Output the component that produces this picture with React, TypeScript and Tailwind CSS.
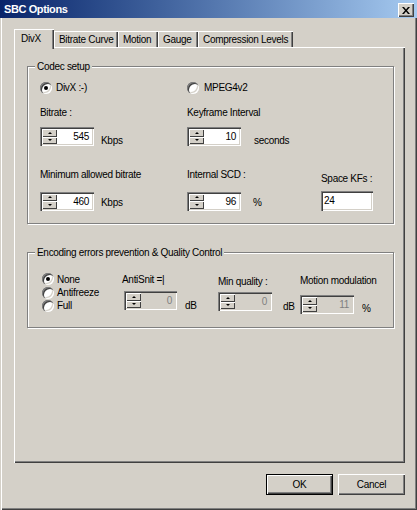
import React from "react";

const FACE = "bg-[#d4d0c8]";
const SUNKEN =
  "shadow-[inset_1px_1px_0_#808080,inset_2px_2px_0_#404040,inset_-1px_-1px_0_#ffffff,inset_-2px_-2px_0_#d4d0c8]";
const RAISED =
  "shadow-[inset_1px_1px_0_#ffffff,inset_-1px_-1px_0_#404040,inset_-2px_-2px_0_#808080]";

function Radio({ checked }: { checked?: boolean }) {
  return (
    <span
      className={`relative inline-block w-[12px] h-[12px] shrink-0 rounded-full bg-white ${SUNKEN}`}
    >
      {checked && (
        <span className="absolute left-[4px] top-[4px] w-[4px] h-[4px] rounded-full bg-black" />
      )}
    </span>
  );
}

function SpinBtn({ up }: { up?: boolean }) {
  return (
    <div
      className={`flex-1 flex items-center justify-center ${FACE} shadow-[inset_1px_1px_0_#ffffff,inset_-1px_-1px_0_#404040]`}
    >
      {up ? (
        <span className="w-0 h-0 border-x-[2px] border-x-transparent border-b-[2px] border-b-black" />
      ) : (
        <span className="w-0 h-0 border-x-[2px] border-x-transparent border-t-[2px] border-t-black" />
      )}
    </div>
  );
}

function Spin({
  value,
  disabled,
  w = "w-[54px]",
}: {
  value: string;
  disabled?: boolean;
  w?: string;
}) {
  return (
    <div
      className={`flex h-[19px] ${w} p-[2px] shrink-0 ${SUNKEN} ${
        disabled ? FACE : "bg-white"
      }`}
    >
      <div className="flex flex-col w-[15px] h-[15px]">
        <SpinBtn up />
        <SpinBtn />
      </div>
      <div
        className={`flex-1 text-right pr-[3px] leading-[15px] ${
          disabled ? "text-[#808080]" : "text-black"
        }`}
      >
        {value}
      </div>
    </div>
  );
}

function Group({
  label,
  className,
  children,
}: {
  label: string;
  className: string;
  children: React.ReactNode;
}) {
  return (
    <div
      className={`relative border border-[#808080] shadow-[inset_1px_1px_0_#ffffff,1px_1px_0_#ffffff] ${className}`}
    >
      <span className={`absolute -top-[7px] left-[7px] px-[2px] leading-[13px] ${FACE}`}>
        {label}
      </span>
      {children}
    </div>
  );
}

function Tab({
  label,
  active,
  w,
}: {
  label: string;
  active?: boolean;
  w: string;
}) {
  if (active) {
    return (
      <div
        className={`relative z-10 ${w} h-[20px] -mb-[2px] ${FACE} shadow-[inset_1px_1px_0_#ffffff,inset_-1px_0_0_#404040,inset_-2px_0_0_#808080] pl-[7px] pt-[3px] leading-[13px]`}
      >
        {label}
      </div>
    );
  }
  return (
    <div
      className={`${w} h-[16px] ${FACE} shadow-[inset_1px_1px_0_#ffffff,inset_-1px_0_0_#404040,inset_-2px_0_0_#808080] pl-[5px] pt-[2px] leading-[13px]`}
    >
      {label}
    </div>
  );
}

export default function App() {
  return (
    <div
      className={`w-[417px] h-[510px] ${FACE} flex flex-col text-[10px] tracking-[-0.3px] text-black shadow-[inset_1px_0_0_#d4d0c8,inset_2px_0_0_#ffffff,inset_-1px_-1px_0_#404040,inset_-2px_-2px_0_#808080] overflow-hidden`}
      style={{ fontFamily: '"Liberation Sans", Arial, sans-serif' }}
    >
      {/* Title bar */}
      <div className="h-[18px] flex items-center justify-between pl-[4px] pr-[3px] bg-gradient-to-r from-[#0a246a] to-[#a6caf0]">
        <span className="text-white font-bold text-[11px] tracking-[-0.4px] leading-[18px]">
          SBC Options
        </span>
        <div
          className={`w-[16px] h-[14px] ${FACE} ${RAISED} flex items-center justify-center mt-[2px]`}
        >
          <svg width="8" height="7" viewBox="0 0 8 7">
            <path
              d="M0 0h2l2 2.5L6 0h2L5 3.5 8 7H6L4 4.5 2 7H0l3-3.5z"
              fill="#000"
            />
          </svg>
        </div>
      </div>

      {/* Tabs */}
      <div className="pl-[14px] pt-[11px]">
        <div className="flex items-end h-[18px]">
          <Tab label="DivX" active w="w-[40px]" />
          <Tab label="Bitrate Curve" w="w-[64px]" />
          <Tab label="Motion" w="w-[40px]" />
          <Tab label="Gauge" w="w-[40px]" />
          <Tab label="Compression Levels" w="w-[95px]" />
        </div>

        {/* Panel */}
        <div
          className={`w-[391px] h-[416px] pt-[19px] pl-[13px] flex flex-col shadow-[inset_1px_1px_0_#ffffff,inset_-1px_-1px_0_#404040,inset_-2px_-2px_0_#808080]`}
        >
          <Group label="Codec setup" className="w-[367px] h-[158px] pt-[14px] pl-[12px]">
            {/* row 1 radios */}
            <div className="flex h-[13px] items-center">
              <div className="w-[147px] flex items-center gap-[4px]">
                <Radio checked />
                <span className="leading-[13px]">DivX :-)</span>
              </div>
              <div className="flex items-center gap-[5px]">
                <Radio />
                <span className="leading-[13px]">MPEG4v2</span>
              </div>
            </div>
            {/* row 2 labels */}
            <div className="flex mt-[12px] leading-[13px]">
              <div className="w-[147px]">Bitrate :</div>
              <div>Keyframe Interval</div>
            </div>
            {/* row 3 spinners */}
            <div className="flex mt-[8px]">
              <div className="w-[147px] flex items-end gap-[7px]">
                <Spin value="545" />
                <span className="leading-[13px] -mb-[1px]">Kbps</span>
              </div>
              <div className="flex items-end gap-[13px]">
                <Spin value="10" />
                <span className="leading-[13px] -mb-[1px]">seconds</span>
              </div>
            </div>
            {/* row 4 labels */}
            <div className="flex mt-[22px] leading-[13px]">
              <div className="w-[147px]">Minimum allowed bitrate</div>
              <div className="w-[134px]">Internal SCD :</div>
              <div className="pt-[4px]">Space KFs :</div>
            </div>
            {/* row 5 */}
            <div className="flex mt-[6px]">
              <div className="w-[147px] flex items-center gap-[7px]">
                <Spin value="460" />
                <span className="leading-[13px] mt-[2px]">Kbps</span>
              </div>
              <div className="w-[134px] flex items-center gap-[12px]">
                <Spin value="96" />
                <span className="leading-[13px] mt-[2px]">%</span>
              </div>
              <div
                className={`w-[52px] h-[20px] bg-white ${SUNKEN} pl-[3px] leading-[20px]`}
              >
                24
              </div>
            </div>
          </Group>

          <Group
            label="Encoding errors prevention & Quality Control"
            className="mt-[28px] w-[367px] h-[76px] pt-[19px] pl-[14px] flex"
          >
            <div className="w-[80px] flex flex-col">
              <div className="h-[14px] flex items-center gap-[3px]">
                <Radio checked />
                <span className="leading-[13px]">None</span>
              </div>
              <div className="h-[13px] flex items-center gap-[3px]">
                <Radio />
                <span className="leading-[13px]">Antifreeze</span>
              </div>
              <div className="h-[13px] flex items-center gap-[3px]">
                <Radio />
                <span className="leading-[13px]">Full</span>
              </div>
            </div>
            <div className="w-[96px] flex flex-col pt-[1px]">
              <div className="leading-[13px]">AntiSnit =|</div>
              <div className="flex items-end gap-[8px] mt-[5px] ml-[2px]">
                <Spin value="0" disabled w="w-[53px]" />
                <span className="leading-[13px] -mb-[2px]">dB</span>
              </div>
            </div>
            <div className="w-[82px] flex flex-col pt-[3px]">
              <div className="leading-[13px]">Min quality :</div>
              <div className="flex items-end gap-[11px] mt-[4px]">
                <Spin value="0" disabled />
                <span className="leading-[13px] -mb-[2px]">dB</span>
              </div>
            </div>
            <div className="flex flex-col pt-[2px]">
              <div className="leading-[13px]">Motion modulation</div>
              <div className="flex items-end gap-[8px] mt-[8px]">
                <Spin value="11" disabled />
                <span className="leading-[13px] -mb-[1px]">%</span>
              </div>
            </div>
          </Group>
        </div>
      </div>

      {/* Buttons */}
      <div className="flex justify-end gap-[5px] pr-[12px] mt-[11px]">
        <div className="w-[67px] h-[21px] border border-black">
          <div
            className={`w-full h-full ${FACE} ${RAISED} flex items-center justify-center leading-[13px]`}
          >
            OK
          </div>
        </div>
        <div
          className={`w-[67px] h-[21px] ${FACE} ${RAISED} flex items-center justify-center leading-[13px]`}
        >
          Cancel
        </div>
      </div>
    </div>
  );
}
